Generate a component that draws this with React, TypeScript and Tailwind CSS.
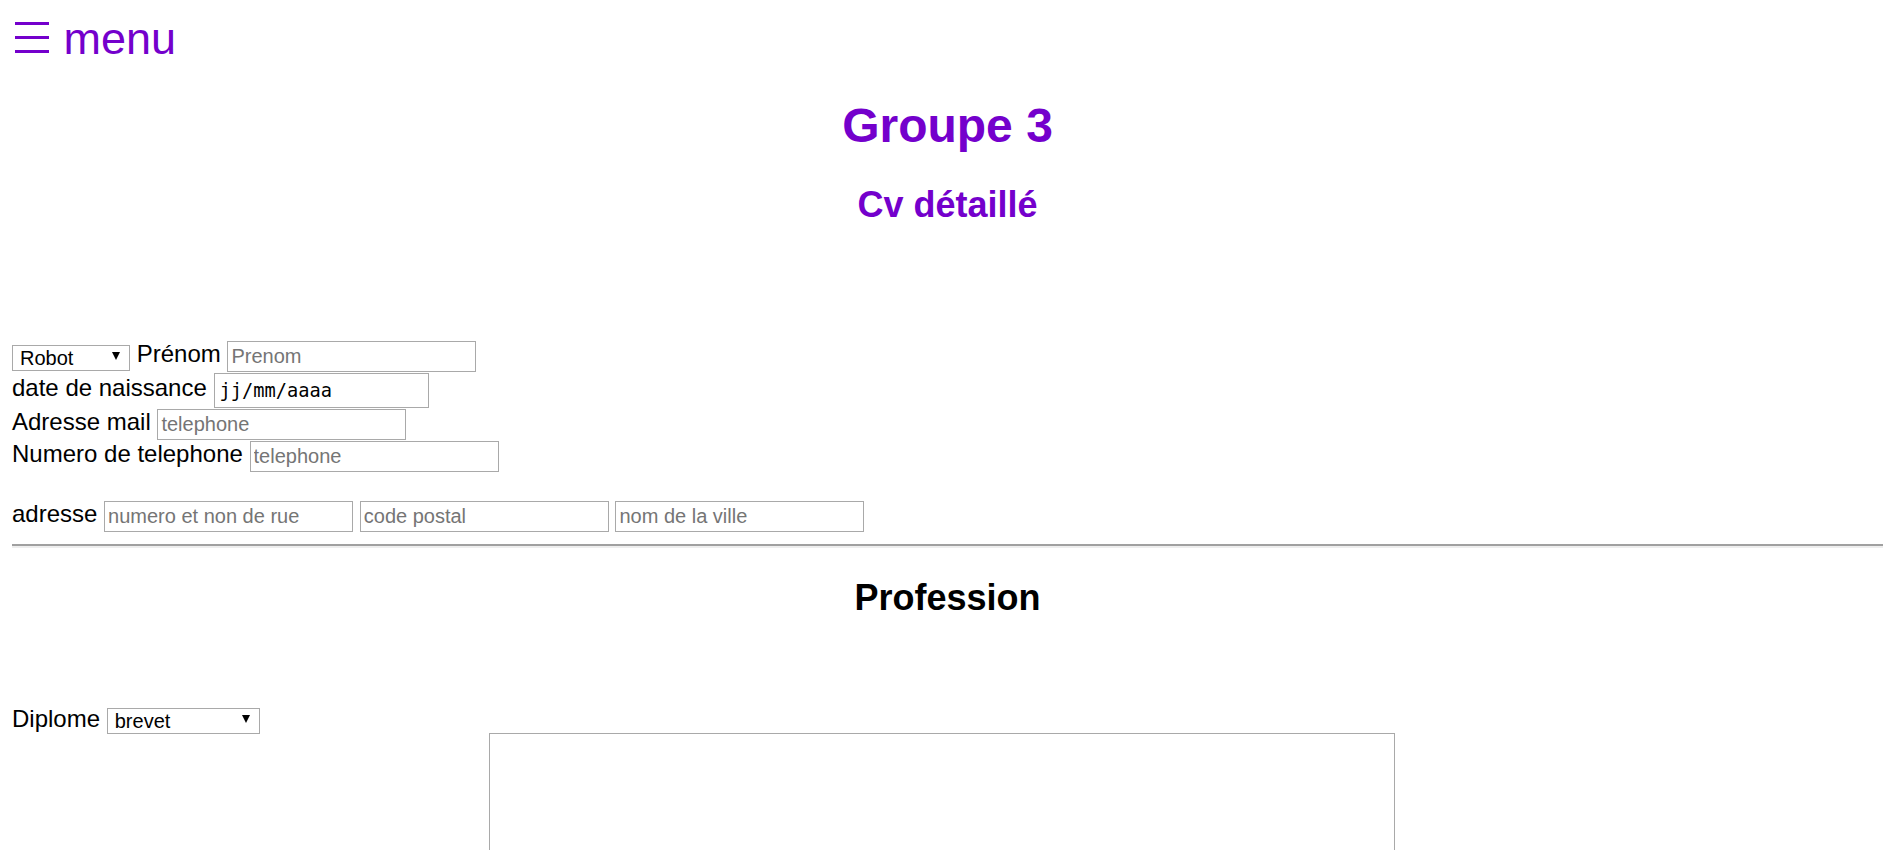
import React from 'react';

const purple = 'text-[#7400cc]';
const inputCls =
    'h-[31px] w-[249px] border border-[#a9a9a9] bg-white px-[3px] text-[20px] text-black placeholder:text-[#757575] outline-none';

const FakeSelect = ({ value, options, width }: { value: string; options: string[]; width: string }) => (
    <div className={`relative h-[26px] ${width}`}>
        <select
            defaultValue={value}
            className="h-full w-full appearance-none border border-[#a9a9a9] bg-white pl-[7px] text-[20px] text-black outline-none"
        >
            {options.map((o) => (
                <option key={o} value={o}>
                    {o}
                </option>
            ))}
        </select>
        {/* arrow drawn over the select */}
        <svg
            className="pointer-events-none absolute right-[10px] top-1/2 -translate-y-1/2"
            width="8"
            height="8"
            viewBox="0 0 8 8"
        >
            <path d="M0 0 H8 L4 8 Z" fill="#000" />
        </svg>
    </div>
);

export default function App() {
    return (
        <div className="min-h-screen bg-white font-['Liberation_Sans',Arial,sans-serif] text-[24px] leading-[normal] text-black">
            {/* menu */}
            <nav className={`flex items-start pl-[15px] pt-[13px] ${purple}`}>
                <svg className="mt-[9px]" width="34" height="31" viewBox="0 0 34 31" aria-label="☰">
                    <rect x="0" y="0" width="34" height="3" fill="currentColor" />
                    <rect x="0" y="14" width="34" height="3" fill="currentColor" />
                    <rect x="0" y="28" width="34" height="3" fill="currentColor" />
                </svg>
                <span className="ml-[14.5px] text-[45px] leading-[normal]">menu</span>
            </nav>

            <div className="pl-[12px]">
                <h1 className={`mt-[33px] text-center text-[48px] font-bold leading-[normal] ${purple}`}>Groupe 3</h1>
                <h2 className={`mt-[31px] text-center text-[36px] font-bold leading-[normal] ${purple}`}>
                    Cv détaillé
                </h2>

                {/* identity */}
                <div className="mt-[114px] flex flex-col">
                    <div className="flex h-[32px] items-center gap-[6.7px]">
                        <FakeSelect value="Robot" options={['Robot', 'Humain']} width="w-[118px]" />
                        <span className="mb-[4px]">Prénom</span>
                        <input className={inputCls} placeholder="Prenom" />
                    </div>
                    <div className="flex h-[36px] items-center gap-[6.7px]">
                        <span className="mb-[4px]">date de naissance</span>
                        <input
                            readOnly
                            value="jj/mm/aaaa"
                            className="h-[35px] w-[215px] border border-[#a9a9a9] bg-white pl-[5px] font-['DejaVu_Sans_Mono',monospace] text-[18.7px] text-black outline-none"
                        />
                    </div>
                    <div className="flex h-[32px] items-center gap-[6.7px]">
                        <span className="mb-[4px]">Adresse mail</span>
                        <input className={inputCls} placeholder="telephone" />
                    </div>
                    <div className="flex h-[32px] items-center gap-[6.7px]">
                        <span className="mb-[4px]">Numero de telephone</span>
                        <input className={inputCls} placeholder="telephone" />
                    </div>
                </div>

                {/* address */}
                <div className="mt-[28px] flex h-[32px] items-center gap-[6.7px]">
                    <span className="mb-[4px]">adresse</span>
                    <input className={inputCls} placeholder="numero et non de rue" />
                    <input className={inputCls} placeholder="code postal" />
                    <input className={inputCls} placeholder="nom de la ville" />
                </div>

                <hr className="mt-[12px] border-t-2 border-b-2 border-t-[#a0a0a0] border-b-[#eeeeee]" />

                <h2 className="mt-[29px] text-center text-[36px] font-bold leading-[normal] text-black">Profession</h2>

                <div className="mt-[86.5px] flex h-[26px] items-center gap-[6.7px]">
                    <span>Diplome</span>
                    <FakeSelect value="brevet" options={['brevet', 'bac', 'licence', 'master']} width="w-[153px]" />
                </div>
            </div>

            <textarea className="mx-auto mt-[1px] block h-[300px] w-[906px] resize-none border border-[#a9a9a9] bg-white outline-none" />
        </div>
    );
}
